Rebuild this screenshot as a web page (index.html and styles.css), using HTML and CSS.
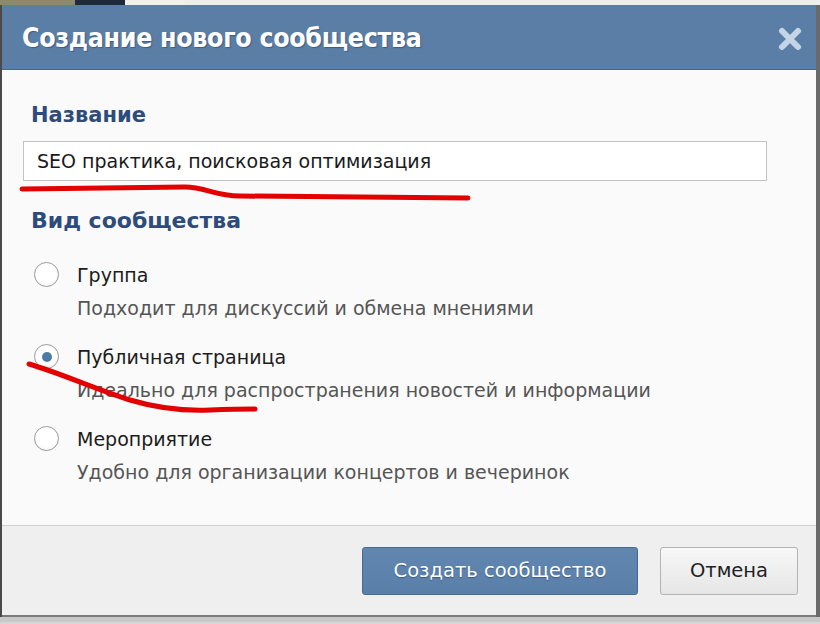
FILE: index.html
```html
<!DOCTYPE html>
<html lang="ru">
<head>
<meta charset="utf-8">
<title>Создание нового сообщества</title>
<link rel="stylesheet" href="styles.css">
</head>
<body>
<div class="topstrip"><span class="ts-a"></span><span class="ts-b"></span><span class="ts-c"></span></div>
<div class="dialog">
  <div class="header">
    <h1 class="title">Создание нового сообщества</h1>
    <svg class="close" width="24" height="24" viewBox="0 0 24 24"><path d="M4 4 L20 20 M20 4 L4 20" stroke="#c5d5e7" stroke-width="6" stroke-linecap="round"/></svg>
  </div>
  <div class="body">
    <div class="label">Название</div>
    <div class="input">SEO практика, поисковая оптимизация</div>
    <div class="label label-kind">Вид сообщества</div>
    <div class="options">
      <div class="option">
        <span class="radio"></span>
        <div class="opt-text">
          <div class="opt-title">Группа</div>
          <div class="opt-desc">Подходит для дискуссий и обмена мнениями</div>
        </div>
      </div>
      <div class="option">
        <span class="radio checked"></span>
        <div class="opt-text">
          <div class="opt-title">Публичная страница</div>
          <div class="opt-desc">Идеально для распространения новостей и информации</div>
        </div>
      </div>
      <div class="option">
        <span class="radio"></span>
        <div class="opt-text">
          <div class="opt-title">Мероприятие</div>
          <div class="opt-desc">Удобно для организации концертов и вечеринок</div>
        </div>
      </div>
    </div>
  </div>
  <div class="footer">
    <button class="btn btn-primary">Создать сообщество</button>
    <button class="btn btn-cancel">Отмена</button>
  </div>
</div>
<div class="bottomstrip"></div>
<svg class="marks" width="820" height="624" viewBox="0 0 820 624">
  <path d="M22 189 L 185 187 C 205 187, 215 196, 240 196 L 468 198" fill="none" stroke="#e30000" stroke-width="5" stroke-linecap="round" stroke-linejoin="round"/>
  <path d="M29 364 C 60 373, 95 389, 130 400 C 160 409, 185 411, 210 410 C 235 409, 248 409, 255 409" fill="none" stroke="#e30000" stroke-width="5" stroke-linecap="round"/>
</svg>
</body>
</html>
```
FILE: styles.css
```css
html, body {
  margin: 0;
  padding: 0;
}
body {
  width: 820px;
  height: 624px;
  overflow: hidden;
  background: #d6d6d6;
  font-family: "DejaVu Sans", "Liberation Sans", sans-serif;
  position: relative;
}
.topstrip {
  height: 5px;
  display: flex;
  background: #eceef0;
}
.ts-a { width: 75px; background: #8c8a6a; }
.ts-b { width: 50px; background: #1e2a3a; }
.ts-c { width: 60px; background: #f0f0f0; }
.dialog {
  border-left: 2px solid #4a4a4a;
  border-right: 4px solid #6a6a6a;
  display: flex;
  flex-direction: column;
}
.header {
  height: 65px;
  box-sizing: border-box;
  background: #5b7ea6;
  border-bottom: 1px solid #45688f;
  display: flex;
  align-items: center;
  justify-content: space-between;
  padding: 0 14px 0 20px;
}
.title {
  margin: 0;
  color: #ffffff;
  font-family: "DejaVu Sans Condensed", "DejaVu Sans", sans-serif;
  font-stretch: condensed;
  font-weight: bold;
  font-size: 26.5px;
  letter-spacing: -0.3px;
  text-shadow: 1px 1px 1px #3d5b80;
}
.close {
  display: block;
  margin-top: 3px;
}
.body {
  box-sizing: border-box;
  background: #fafafa;
  height: 456px;
  padding: 32px 49px 0 21px;
  border-bottom: 1px solid #d0d0d0;
}
.label {
  color: #2d4b7b;
  font-weight: bold;
  font-size: 21px;
  line-height: 26px;
  padding-left: 8px;
}
.input {
  margin-top: 13px;
  height: 38px;
  border: 1px solid #c2c2c2;
  background: #ffffff;
  color: #1a1a1a;
  font-size: 19px;
  line-height: 38px;
  padding-left: 13px;
}
.label-kind {
  margin-top: 27px;
  font-size: 22px;
}
.options {
  margin-top: 27px;
  display: flex;
  flex-direction: column;
  gap: 19px;
  padding-left: 11px;
}
.option {
  display: flex;
  align-items: flex-start;
  gap: 18px;
}
.radio {
  width: 25px;
  height: 25px;
  box-sizing: border-box;
  border: 1px solid #9a9a9a;
  border-radius: 50%;
  background: radial-gradient(circle at 50% 40%, #ffffff 55%, #ececec 100%);
  margin-top: 1px;
  display: flex;
  align-items: center;
  justify-content: center;
  flex: none;
}
.radio.checked::after {
  content: "";
  width: 10px;
  height: 10px;
  border-radius: 50%;
  background: #4d7aa5;
}
.opt-title {
  font-size: 19px;
  line-height: 28px;
  color: #1c1c1c;
}
.opt-desc {
  font-size: 19px;
  line-height: 32px;
  color: #555555;
  margin-top: 3px;
}
.footer {
  height: 91px;
  box-sizing: border-box;
  background: #efefef;
  display: flex;
  align-items: center;
  justify-content: flex-end;
  gap: 22px;
  padding-right: 18px;
  border-bottom: 2px solid #7a7a7a;
}
.btn {
  height: 48px;
  font-family: "DejaVu Sans", "Liberation Sans", sans-serif;
  font-size: 19.5px;
  border-radius: 3px;
  padding: 0;
}
.btn-primary {
  width: 276px;
  background: linear-gradient(#6187b0, #5a7fa8);
  border: 1px solid #46698f;
  color: #ffffff;
  text-shadow: 0 1px 1px #3d5b80;
}
.btn-cancel {
  width: 138px;
  background: linear-gradient(#f7f7f7, #e6e6e6);
  border: 1px solid #b3b3b3;
  color: #222222;
}
.bottomstrip {
  height: 5px;
  background: #c8c8c8;
}
.marks {
  position: absolute;
  left: 0;
  top: 0;
  pointer-events: none;
}
```
